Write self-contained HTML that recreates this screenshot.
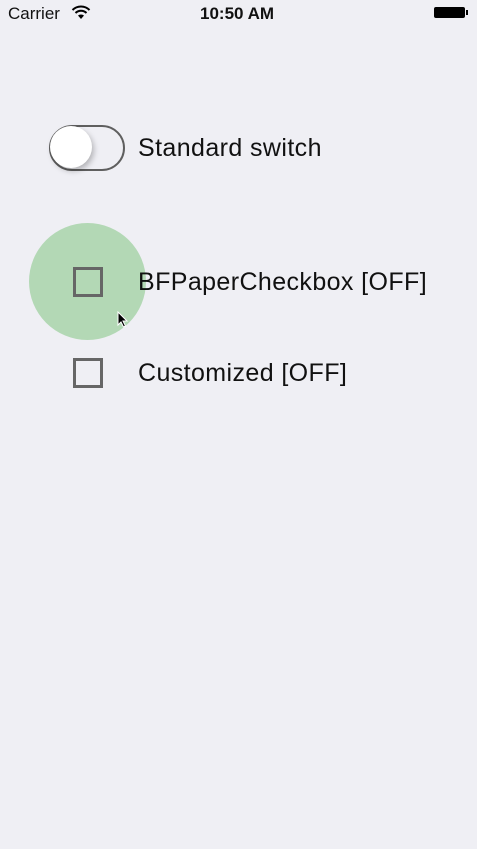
<!DOCTYPE html>
<html><head><style>
body{margin:0;width:477px;height:849px;background:#efeff4;position:relative;overflow:hidden;font-family:"Liberation Sans",sans-serif;color:#111}
.a{position:absolute}
.t{font-size:25px;letter-spacing:0.4px;white-space:nowrap;line-height:28px}
.cb{position:absolute;width:24px;height:24px;border:3px solid #666;box-sizing:content-box}
</style></head><body>
<div class="a" style="left:8px;top:4px;font-size:17px">Carrier</div>
<svg class="a" style="left:71px;top:5px" width="20" height="15" viewBox="0 0 20 15"><path d="M10 14 L7 10.5 A5 5 0 0 1 13 10.5Z" fill="#000"/><path d="M4.5 8 A8 8 0 0 1 15.5 8" stroke="#000" stroke-width="2" fill="none"/><path d="M1.5 5 A12 12 0 0 1 18.5 5" stroke="#000" stroke-width="2" fill="none"/></svg>
<div class="a" style="left:200px;top:4px;font-size:17px;font-weight:bold">10:50 AM</div>
<div class="a" style="left:434px;top:7px;width:31px;height:11px;background:#000;border-radius:2px"></div>
<div class="a" style="left:466px;top:10px;width:2px;height:5px;background:#000"></div>

<div class="a" style="left:49px;top:125px;width:72px;height:42px;border:2px solid #5f5f5f;border-radius:23px"></div>
<div class="a" style="left:50px;top:126px;width:42px;height:42px;border-radius:50%;background:#fff;box-shadow:2px 3px 6px rgba(0,0,0,.25)"></div>
<div class="a t" style="left:138px;top:134px">Standard switch</div>

<div class="a" style="left:29px;top:223px;width:117px;height:117px;border-radius:50%;background:#b3d8b5"></div>
<div class="cb" style="left:73px;top:267px"></div>
<div class="a t" style="left:138px;top:268px">BFPaperCheckbox [OFF]</div>
<svg class="a" style="left:117px;top:311px" width="12" height="18" viewBox="0 0 12 18"><path d="M1 1 L1 14 L4 11 L6.5 16 L8.5 15 L6 10 L10 10 Z" fill="#000" stroke="#fff" stroke-width="1"/></svg>

<div class="cb" style="left:73px;top:358px"></div>
<div class="a t" style="left:138px;top:359px">Customized [OFF]</div>
</body></html>
